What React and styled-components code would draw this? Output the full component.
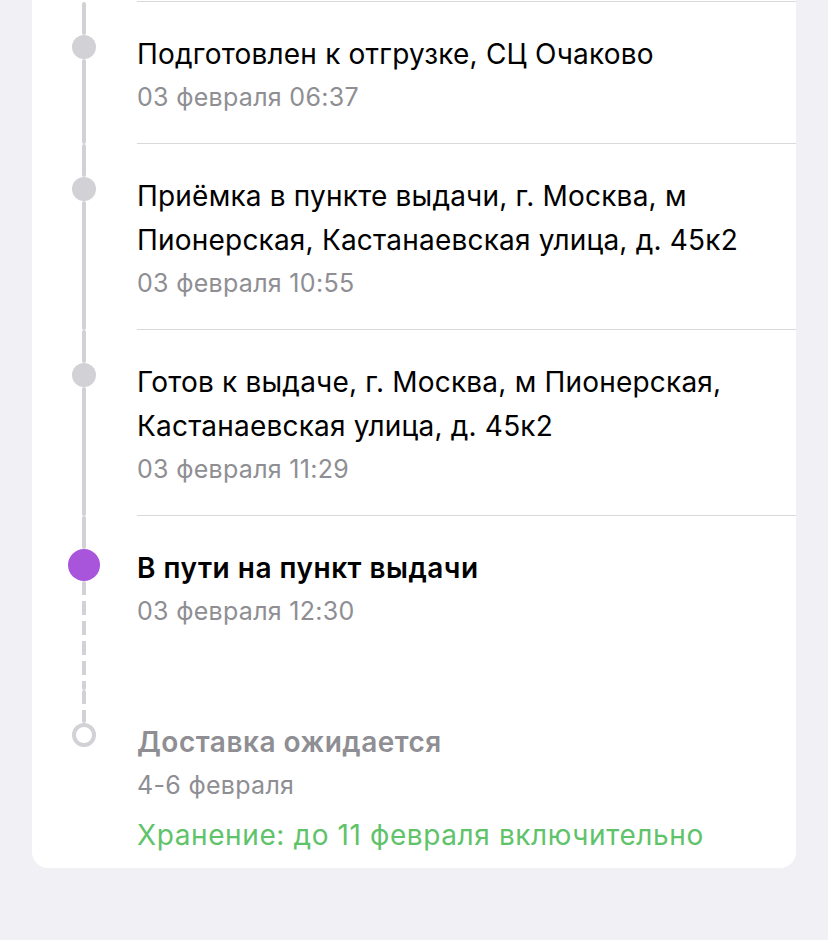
import React from "react";
import styled, { createGlobalStyle, css } from "styled-components";

const GlobalStyle = createGlobalStyle`
  html, body {
    margin: 0;
    padding: 0;
    background: #f0f0f5;
  }
  body {
    font-family: Inter, "Noto Sans", "Liberation Sans", sans-serif;
    -webkit-font-smoothing: antialiased;
  }
`;

const Page = styled.div`
  width: 828px;
  height: 940px;
  padding: 0 32px;
  box-sizing: border-box;
  overflow: hidden;
`;

const Card = styled.div`
  background: #fff;
  border-radius: 0 0 16px 16px;
  padding: 2px 0 16px;
`;

const Item = styled.div`
  display: flex;
  align-items: stretch;
`;

const Marker = styled.div`
  width: 105px;
  padding-right: 1px;
  box-sizing: border-box;
  display: flex;
  flex-direction: column;
  align-items: center;
  flex-shrink: 0;
`;

const segmentStyles = {
  solid: css`
    background: #d1d1d6;
  `,
  dashed: css`
    background: repeating-linear-gradient(
      to bottom,
      #d1d1d6 0 14px,
      transparent 14px 20px
    );
  `,
  none: css`
    background: transparent;
  `,
};

const Segment = styled.div`
  width: 4px;
  border-radius: 2px;
  ${(p) => (p.$grow ? "flex: 1;" : `height: ${p.$h}px; flex-shrink: 0;`)}
  ${(p) => segmentStyles[p.$kind || "solid"]}
`;

const Dot = styled.div`
  flex-shrink: 0;
  box-sizing: border-box;
  border-radius: 50%;
  ${(p) =>
    p.$kind === "active"
      ? css`
          width: 32px;
          height: 32px;
          background: #a855dc;
        `
      : p.$kind === "pending"
      ? css`
          width: 24px;
          height: 24px;
          border: 4px solid #d1d1d6;
          background: #fff;
        `
      : css`
          width: 24px;
          height: 24px;
          background: #d1d1d6;
        `}
`;

const Content = styled.div`
  flex: 1;
  padding: 30px 24px ${(p) => p.$bottom}px 0;
  border-top: 1px solid ${(p) => (p.$divider ? "#d9d9dc" : "transparent")};
  margin-top: -1px;
`;

const Title = styled.div`
  font-size: 28px;
  line-height: 44px;
  letter-spacing: ${(p) => (p.$strong ? "0.5px" : "0.2px")};
  font-weight: ${(p) => (p.$strong ? 600 : 400)};
  color: ${(p) => p.$color || "#000"};
`;

const Meta = styled.div`
  margin-top: 4px;
  font-size: 25px;
  line-height: 34px;
  letter-spacing: 0.3px;
  color: #8e8e93;
`;

const Note = styled.div`
  margin-top: 16px;
  font-size: 28px;
  line-height: 34px;
  letter-spacing: 0.6px;
  color: #60c36a;
`;

const events = [
  {
    title: "Подготовлен к отгрузке, СЦ Очаково",
    date: "03 февраля 06:37",
    bottom: "solid",
  },
  {
    title: "Приёмка в пункте выдачи, г. Москва, м Пионерская, Кастанаевская улица, д. 45к2",
    date: "03 февраля 10:55",
    bottom: "solid",
  },
  {
    title: "Готов к выдаче, г. Москва, м Пионерская, Кастанаевская улица, д. 45к2",
    date: "03 февраля 11:29",
    bottom: "solid",
  },
  {
    title: "В пути на пункт выдачи",
    date: "03 февраля 12:30",
    bottom: "dashed",
    dot: "active",
    strong: true,
    pad: 62,
  },
];

export default function App() {
  return (
    <>
      <GlobalStyle />
      <Page>
        <Card>
          {events.map((e) => (
            <Item key={e.date}>
              <Marker>
                <Segment $h={33} $kind="solid" />
                <Dot $kind={e.dot} />
                <Segment $grow $kind={e.bottom} />
              </Marker>
              <Content $divider $bottom={e.pad || 30}>
                <Title $strong={e.strong}>{e.title}</Title>
                <Meta>{e.date}</Meta>
              </Content>
            </Item>
          ))}
          <Item>
            <Marker>
              <Segment $h={33} $kind="dashed" />
              <Dot $kind="pending" />
              <Segment $grow $kind="none" />
            </Marker>
            <Content $bottom={0}>
              <Title $strong $color="#8e8e93">Доставка ожидается</Title>
              <Meta>4-6 февраля</Meta>
              <Note>Хранение: до 11 февраля включительно</Note>
            </Content>
          </Item>
        </Card>
      </Page>
    </>
  );
}
